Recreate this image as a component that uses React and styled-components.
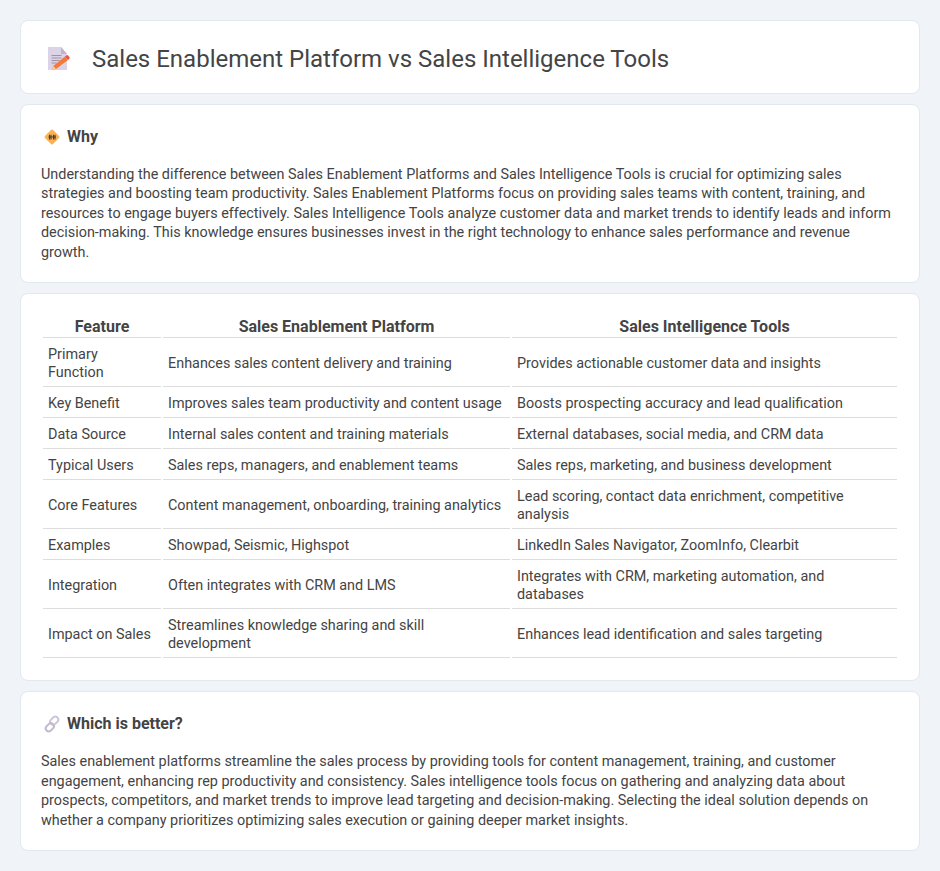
import React from 'react';
import styled, { createGlobalStyle } from 'styled-components';

const GlobalStyle = createGlobalStyle`
  html, body {
    margin: 0;
    padding: 0;
    background-color: #f0f4f8;
  }
  body {
    font-family: Roboto, "Liberation Sans", sans-serif;
    color: #444;
  }
`;

const Page = styled.div`
  padding: 20px;
  display: flex;
  flex-direction: column;
  gap: 10px;
`;

const Card = styled.section`
  background-color: #fff;
  border: 1px solid #e2e8f0;
  border-radius: 8px;
  padding: 20px;
`;

const TitleCard = styled(Card)`
  padding: 22px 26px 18px;
`;

const TitleRow = styled.div`
  display: flex;
  align-items: center;
  gap: 21px;
`;

const Title = styled.h1`
  margin: 0;
  font-size: 24px;
  font-weight: 400;
  line-height: 32px;
  color: #444;
`;

const SectionHead = styled.div`
  display: flex;
  align-items: center;
  gap: 6px;
  padding-left: 2px;
  margin-bottom: 16px;
`;

const SectionTitle = styled.h2`
  margin: 0;
  font-size: 16px;
  font-weight: 700;
  line-height: 24px;
  color: #444;
`;

const Body = styled.p`
  margin: 0;
  font-size: 14.4px;
  line-height: 19.44px;
  color: #444;
`;

const Table = styled.table`
  width: 100%;
  table-layout: fixed;
  border-collapse: separate;
  border-spacing: 2px;
  font-size: 14.4px;
  line-height: 18px;
  color: #444;
`;

const Th = styled.th`
  width: ${(p) => p.$width || 'auto'};
  font-weight: 700;
  font-size: 16px;
  padding: 2px 5px 1px;
  text-align: center;
  border-bottom: 1px solid #ddd;
`;

const Td = styled.td`
  padding: 6px 5px 4px;
  text-align: left;
  border-bottom: 1px solid #ddd;
`;

const DocIcon = () => (
  <svg width="24" height="24" viewBox="0 0 24 24">
    <path d="M1 0h13l6 7v16H1z" fill="#dcd4e6" />
    <path d="M14 0l6 7h-6z" fill="#bfb4cc" />
    <path d="M4.500 8.500h10M4.500 11h10M4.500 13.500h8M4.500 16h5" stroke="#9c93a8" strokeWidth="1" />
    <path d="M5 23l1.200-4L18 9.500l3 3.500L9 22z" fill="#f5793b" />
    <path d="M18 9.500l1.300-1.100a1.400 1.400 0 0 1 1.900.2l1.200 1.400a1.400 1.400 0 0 1-.2 1.900L21 13z" fill="#ef5350" />
    <path d="M5 23l1.200-4L9 22z" fill="#f9cfa9" />
  </svg>
);

const WhyIcon = () => (
  <svg width="18" height="18" viewBox="0 0 18 18">
    <rect x="3.300" y="3.300" width="11.400" height="11.400" rx="1.500" transform="rotate(45 9 9)" fill="#fbb254" />
    <path d="M6.500 6.800v4.600M8 6.800v4.600M10.500 6.800v4.600M12 6.800v4.600M5.500 9h7.500" stroke="#4b3d30" strokeWidth="1.100" />
  </svg>
);

const LinkIcon = () => (
  <svg width="18" height="18" viewBox="0 0 18 18" fill="none">
    <rect x="8.200" y="1.200" width="6" height="9" rx="3" transform="rotate(45 11.200 5.700)" stroke="#cfc5da" strokeWidth="2" />
    <rect x="3.800" y="7.800" width="6" height="9" rx="3" transform="rotate(45 6.800 12.300)" stroke="#c4b8d1" strokeWidth="2" />
  </svg>
);

const rows = [
  ['Primary Function', 'Enhances sales content delivery and training', 'Provides actionable customer data and insights'],
  ['Key Benefit', 'Improves sales team productivity and content usage', 'Boosts prospecting accuracy and lead qualification'],
  ['Data Source', 'Internal sales content and training materials', 'External databases, social media, and CRM data'],
  ['Typical Users', 'Sales reps, managers, and enablement teams', 'Sales reps, marketing, and business development'],
  ['Core Features', 'Content management, onboarding, training analytics', 'Lead scoring, contact data enrichment, competitive analysis'],
  ['Examples', 'Showpad, Seismic, Highspot', 'LinkedIn Sales Navigator, ZoomInfo, Clearbit'],
  ['Integration', 'Often integrates with CRM and LMS', 'Integrates with CRM, marketing automation, and databases'],
  ['Impact on Sales', 'Streamlines knowledge sharing and skill development', 'Enhances lead identification and sales targeting'],
];

const App = () => {
  return (
    <Page>
      <GlobalStyle />
      <TitleCard>
        <TitleRow>
          <DocIcon />
          <Title>Sales Enablement Platform vs Sales Intelligence Tools</Title>
        </TitleRow>
      </TitleCard>
      <Card>
        <SectionHead>
          <WhyIcon />
          <SectionTitle>Why</SectionTitle>
        </SectionHead>
        <Body>
          Understanding the difference between Sales Enablement Platforms and Sales Intelligence Tools is crucial for optimizing sales strategies and boosting team productivity. Sales Enablement Platforms focus on providing sales teams with content, training, and resources to engage buyers effectively. Sales Intelligence Tools analyze customer data and market trends to identify leads and inform decision-making. This knowledge ensures businesses invest in the right technology to enhance sales performance and revenue growth.
        </Body>
      </Card>
      <Card>
        <Table>
          <thead>
            <tr>
              <Th $width="108px">Feature</Th>
              <Th $width="337px">Sales Enablement Platform</Th>
              <Th>Sales Intelligence Tools</Th>
            </tr>
          </thead>
          <tbody>
            {rows.map((row) => (
              <tr key={row[0]}>
                {row.map((cell) => (
                  <Td key={cell}>{cell}</Td>
                ))}
              </tr>
            ))}
          </tbody>
        </Table>
      </Card>
      <Card>
        <SectionHead>
          <LinkIcon />
          <SectionTitle>Which is better?</SectionTitle>
        </SectionHead>
        <Body>
          Sales enablement platforms streamline the sales process by providing tools for content management, training, and customer engagement, enhancing rep productivity and consistency. Sales intelligence tools focus on gathering and analyzing data about prospects, competitors, and market trends to improve lead targeting and decision-making. Selecting the ideal solution depends on whether a company prioritizes optimizing sales execution or gaining deeper market insights.
        </Body>
      </Card>
    </Page>
  );
};

export default App;
